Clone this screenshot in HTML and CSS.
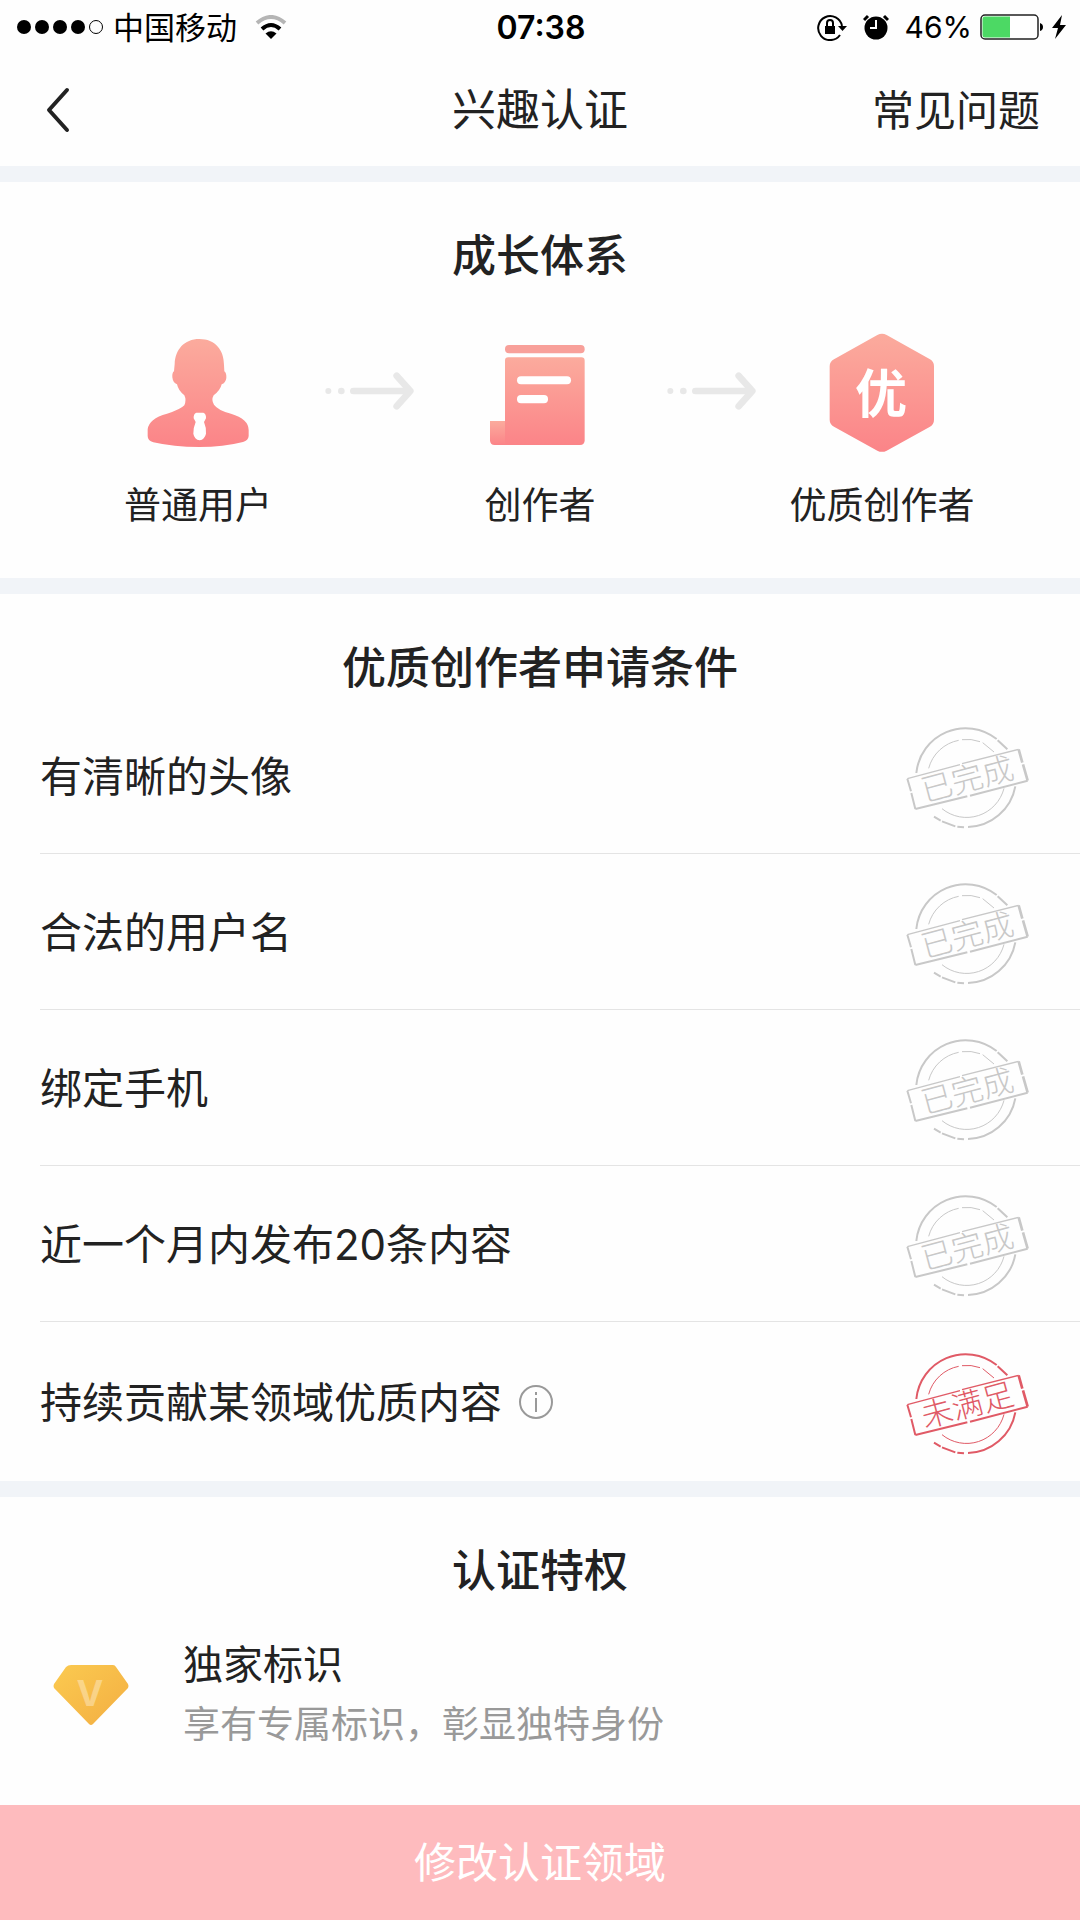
FILE: index.html
```html
<!DOCTYPE html>
<html lang="zh-CN">
<head>
  <meta charset="UTF-8">
  <meta name="viewport" content="width=device-width, initial-scale=1">
  <title>兴趣认证</title>
  <link rel="stylesheet" href="styles.css">
</head>
<body>

  <!-- shared drawings -->
  <svg class="defs" aria-hidden="true">
    <defs>
      <linearGradient id="pink" x1="0" y1="0" x2="0" y2="1">
        <stop offset="0" stop-color="#fbab9d"/>
        <stop offset="1" stop-color="#fb8488"/>
      </linearGradient>
      <linearGradient id="gold" x1="0" y1="0" x2="1" y2="1">
        <stop offset="0" stop-color="#fbca50"/>
        <stop offset="1" stop-color="#f3ae42"/>
      </linearGradient>
      <symbol id="arrow" viewBox="0 0 276 120">
        <g fill="none" stroke="#e8e8e8" stroke-width="20" stroke-linecap="round" stroke-linejoin="round">
          <path d="M91 60H258M221 14L262 60L221 106"/>
        </g>
        <circle cx="16" cy="60" r="9" fill="#e8e8e8"/>
        <circle cx="55" cy="60" r="10" fill="#e8e8e8"/>
      </symbol>
      <symbol id="stamp" viewBox="0 0 540 390">
        <g fill="none" stroke="currentColor">
          <path stroke-width="6" d="M109 186A149 149 0 0 1 350 84M353 88L382 115"/>
          <path stroke-width="6" d="M406 226A149 149 0 0 1 264 348M252 349L232 347M226 346L186 331M182 329L162 317"/>
          <path stroke-width="3" d="M146 172A116 116 0 0 1 236 88M246 86A116 116 0 0 1 300 92M308 95L342 123"/>
          <path stroke-width="3" d="M372 232A116 116 0 0 1 186 293"/>
          <path stroke-width="4" d="M82 203L240 161M246 158L416 115"/>
          <path stroke-width="8" d="M416 115L427 155M429 160L443 209"/>
          <path stroke-width="6" d="M443 209L270 254M262 256L106 294"/>
          <path stroke-width="6" d="M106 294L94 246M93 241L82 203"/>
        </g>
      </symbol>
    </defs>
  </svg>

  <div class="status-bar">
    <div class="status-left">
      <svg class="signal" viewBox="0 0 88 16">
        <circle cx="8" cy="8" r="7"/>
        <circle cx="26" cy="8" r="7"/>
        <circle cx="44" cy="8" r="7"/>
        <circle cx="62" cy="8" r="7"/>
        <circle cx="80" cy="8" r="6.5" fill="none" stroke="#000"/>
      </svg>
      <span class="carrier">中国移动</span>
      <svg class="wifi" viewBox="0 0 32 24">
        <g fill="none" stroke-width="4">
          <path stroke="#b5b5b5" d="M2 8Q16 -4 30 8"/>
          <path stroke="#000" d="M7 14Q16 6 25 14"/>
        </g>
        <path d="M10.500 18.500Q16 14 21.500 18.500L16 24Z"/>
      </svg>
    </div>
    <span class="clock">07:38</span>
    <div class="status-right">
      <svg class="lock" viewBox="0 0 30 28">
        <path d="M23 22A12 12 0 1 1 25 13" fill="none" stroke="#000" stroke-width="2"/>
        <path d="M21 13H30L25.500 18Z"/>
        <path d="M8 13H18V21H8Z"/>
        <path d="M10 13V10A3 3 0 0 1 16 10V13" fill="none" stroke="#000" stroke-width="2"/>
      </svg>
      <svg class="alarm" viewBox="0 0 26 26">
        <circle cx="13" cy="14" r="11.500"/>
        <path d="M1 6L5 2M25 6L21 2" stroke="#000" stroke-width="3"/>
        <path d="M13 6V14H7" fill="none" stroke="#fff" stroke-width="2"/>
      </svg>
      <span class="percent">46%</span>
      <svg class="battery" viewBox="0 0 64 26">
        <rect x="1" y="1" width="57" height="24" rx="4" fill="#fff" stroke="#222" stroke-width="1.500"/>
        <path d="M5 2.500H30V23.500H5Q2.500 23.500 2.500 21V5Q2.500 2.500 5 2.500Z" fill="#4cd964"/>
        <path d="M60 9Q63 10 63 13T60 17Z"/>
      </svg>
      <svg class="bolt" viewBox="0 0 14 24">
        <path d="M10 0L0 13H6L3 24L14 10H8Z"/>
      </svg>
    </div>
  </div>

  <header class="navbar">
    <button class="back" type="button" aria-label="返回">
      <svg viewBox="0 0 24 46"><path d="M21 3L3 23L21 43"/></svg>
    </button>
    <h1>兴趣认证</h1>
    <a class="faq" href="#faq">常见问题</a>
  </header>

  <main>
    <section class="panel growth">
      <h2>成长体系</h2>
      <div class="steps">
        <div class="step">
          <svg class="step-icon" viewBox="114 66 360 360">
            <path fill="url(#pink)" d="M298 87C346 87 372 120 372 165L373 184Q380 189 379 204Q377 219 365 223Q361 241 341 256Q333 270 342 284Q354 301 393 311Q446 327 446 360V378Q445 392 429 396Q370 411 298 411Q220 411 160 397Q143 392 143 378V358Q146 326 201 311Q241 299 253 286Q260 270 253 256Q235 242 231 223Q219 219 217 202Q216 188 222 184L224 162C226 119 252 87 298 87Z"/>
            <path fill="#fff" d="M289 308H310Q319 312 318 325L312 336Q319 352 318 371Q314 388 299 391Q283 388 280 371Q280 352 287 336L281 325Q280 312 289 308Z"/>
          </svg>
          <span>普通用户</span>
        </div>
        <svg class="arrow"><use href="#arrow"/></svg>
        <div class="step">
          <svg class="step-icon" viewBox="30 66 360 360">
            <rect x="105" y="105" width="239" height="25" rx="12" fill="#f8a09a"/>
            <path fill="url(#pink)" d="M60 333H108V405H74Q60 405 60 391Z"/>
            <path fill="url(#pink)" d="M115 142H334Q344 142 344 152V391Q344 405 330 405H105V152Q105 142 115 142Z"/>
            <rect x="141" y="199" width="162" height="24" rx="12" fill="#fff"/>
            <rect x="141" y="255" width="93" height="25" rx="12" fill="#fff"/>
          </svg>
          <span>创作者</span>
        </div>
        <svg class="arrow"><use href="#arrow"/></svg>
        <div class="step">
          <svg class="step-icon" viewBox="1056 66 360 360">
            <path fill="url(#pink)" d="M1222 75Q1236 68 1250 75L1380 148Q1392 155 1392 169V329Q1392 343 1380 350L1250 422Q1236 429 1222 422L1092 350Q1079 343 1079 329V169Q1079 155 1092 148Z"/>
            <text class="badge-char" x="1233" y="310">优</text>
          </svg>
          <span>优质创作者</span>
        </div>
      </div>
    </section>

    <section class="panel">
      <h2>优质创作者申请条件</h2>
      <ul class="conditions">
        <li>
          <span>有清晰的头像</span>
          <svg class="stamp" viewBox="0 0 540 390">
            <use href="#stamp"/>
            <text transform="rotate(-15 262 204)" x="262" y="238">已完成</text>
          </svg>
        </li>
        <li>
          <span>合法的用户名</span>
          <svg class="stamp" viewBox="0 0 540 390">
            <use href="#stamp"/>
            <text transform="rotate(-15 262 204)" x="262" y="238">已完成</text>
          </svg>
        </li>
        <li>
          <span>绑定手机</span>
          <svg class="stamp" viewBox="0 0 540 390">
            <use href="#stamp"/>
            <text transform="rotate(-15 262 204)" x="262" y="238">已完成</text>
          </svg>
        </li>
        <li>
          <span>近一个月内发布20条内容</span>
          <svg class="stamp" viewBox="0 0 540 390">
            <use href="#stamp"/>
            <text transform="rotate(-15 262 204)" x="262" y="238">已完成</text>
          </svg>
        </li>
        <li>
          <span>持续贡献某领域优质内容</span>
          <button class="info" type="button" aria-label="说明">
            <svg viewBox="0 0 36 36">
              <circle cx="18" cy="18" r="16"/>
              <path d="M18 14V28M18 8V11"/>
            </svg>
          </button>
          <svg class="stamp unmet" viewBox="0 0 540 390">
            <use href="#stamp"/>
            <text transform="rotate(-15 262 204)" x="262" y="238">未满足</text>
          </svg>
        </li>
      </ul>
    </section>

    <section class="panel">
      <h2>认证特权</h2>
      <div class="privilege">
        <svg class="gem" viewBox="0 0 76 62">
          <path fill="url(#gold)" d="M18 1H60Q62 1 63 3L75 20Q76 22 75 24L40 60Q38 62 36 60L1 24Q0 22 1 20L13 3Q15 1 18 1Z"/>
          <text x="37" y="42">V</text>
        </svg>
        <div>
          <h3>独家标识</h3>
          <p>享有专属标识，彰显独特身份</p>
        </div>
      </div>
    </section>
  </main>

  <button class="submit" type="button">修改认证领域</button>

</body>
</html>
```
FILE: styles.css
```css
* {
  box-sizing: border-box;
}

body {
  margin: 0;
  min-height: 100vh;
  display: flex;
  flex-direction: column;
  background: #fefefe;
  color: #222;
  font-family: Inter, "Noto Sans CJK SC", sans-serif;
}

button {
  padding: 0;
  border: none;
  background: none;
  font: inherit;
  cursor: pointer;
}

svg {
  display: block;
  flex-shrink: 0;
}

.defs {
  position: absolute;
  width: 0;
  height: 0;
}

/* status bar */
.status-bar {
  display: grid;
  grid-template-columns: 1fr auto 1fr;
  align-items: center;
  height: 54px;
  padding: 0 14px 0 16px;
  color: #000;
  font-size: 31px;
}

.status-left,
.status-right {
  display: flex;
  align-items: center;
}

.status-right {
  justify-content: flex-end;
}

.signal {
  width: 88px;
  height: 16px;
  margin-right: 9px;
}

.carrier {
  padding-bottom: 4px;
}

.wifi {
  width: 32px;
  height: 24px;
  margin-left: 18px;
}

.clock {
  font-size: 32px;
  font-weight: 600;
}

.lock {
  width: 30px;
  height: 28px;
  margin-right: 16px;
}

.alarm {
  width: 26px;
  height: 26px;
  margin-right: 16px;
}

.percent {
  font-size: 30px;
}

.battery {
  width: 64px;
  height: 26px;
  margin: 0 8px;
}

.bolt {
  width: 14px;
  height: 24px;
}

/* navbar */
.navbar {
  display: grid;
  grid-template-columns: 1fr auto 1fr;
  align-items: center;
  height: 112px;
  padding: 0 40px;
}

.back {
  width: 36px;
  height: 60px;
}

.back svg {
  width: 24px;
  height: 46px;
  margin: 0 auto;
  fill: none;
  stroke: #222;
  stroke-width: 4;
  stroke-linecap: round;
  stroke-linejoin: round;
}

.navbar h1 {
  margin: 0;
  padding-bottom: 6px;
  font-size: 44px;
  font-weight: 400;
}

.faq {
  justify-self: end;
  padding-bottom: 6px;
  color: inherit;
  font-size: 42px;
  text-decoration: none;
}

/* sections */
.panel {
  border-top: 16px solid #f1f4f8;
}

.panel h2 {
  margin: 0;
  padding-top: 44px;
  font-size: 44px;
  font-weight: 500;
  line-height: 60px;
  text-align: center;
}

.growth {
  padding-bottom: 46px;
}

.steps {
  display: grid;
  grid-template-columns: 200px 1fr 200px 1fr 200px;
  padding: 46px 98px 0;
}

.step {
  display: flex;
  flex-direction: column;
  align-items: center;
  gap: 28px;
  font-size: 37px;
  line-height: 52px;
}

.step-icon {
  width: 120px;
  height: 120px;
}

.badge-char {
  fill: #fff;
  font-size: 156px;
  font-weight: 700;
  text-anchor: middle;
}

.arrow {
  width: 92px;
  height: 40px;
  margin: 39px auto 0;
}

.conditions {
  margin: 0;
  padding: 0 0 0 40px;
  list-style: none;
}

.conditions li {
  display: flex;
  align-items: center;
  height: 156px;
  padding-right: 20px;
  border-bottom: 1px solid #e4e4e4;
  font-size: 42px;
}

.conditions li:last-child {
  height: 159px;
  border-bottom: none;
}

.conditions span {
  padding-bottom: 4px;
}

.info {
  margin-left: 16px;
}

.info svg {
  width: 36px;
  height: 36px;
  fill: none;
  stroke: #999;
  stroke-width: 2;
}

.stamp {
  width: 180px;
  height: 130px;
  margin-left: auto;
  color: #c8c8c8;
}

.stamp text {
  fill: currentColor;
  font-size: 94px;
  font-weight: 300;
  text-anchor: middle;
}

.stamp.unmet {
  color: #e05a66;
}

.privilege {
  display: flex;
  align-items: center;
  gap: 54px;
  padding: 34px 53px 44px;
}

.gem {
  width: 76px;
  height: 62px;
}

.gem text {
  fill: #fff;
  fill-opacity: 0.35;
  font-size: 36px;
  font-weight: 700;
  text-anchor: middle;
}

.privilege h3 {
  margin: 0;
  font-size: 40px;
  font-weight: 400;
  line-height: 60px;
}

.privilege p {
  margin: 0;
  color: #999;
  font-size: 37px;
  line-height: 60px;
}

.submit {
  position: sticky;
  bottom: 0;
  height: 115px;
  margin-top: auto;
  padding-bottom: 6px;
  background: #febbbe;
  color: #fff;
  font-size: 42px;
}
```
